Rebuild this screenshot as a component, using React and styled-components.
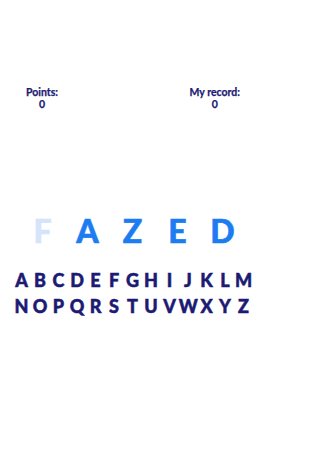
import React from 'react';
import styled, { createGlobalStyle } from 'styled-components';

const GlobalStyle = createGlobalStyle`
  html, body {
    margin: 0;
    padding: 0;
    background: #ffffff;
  }
  body {
    font-family: Lato, "Open Sans", sans-serif;
  }
`;

const Screen = styled.div`
  width: 265px;
  height: 471px;
  display: flex;
  flex-direction: column;
  background: #ffffff;
`;

const Scores = styled.div`
  display: flex;
  justify-content: space-between;
  padding: 86px 25px 0 26px;
`;

const Stat = styled.div`
  display: flex;
  flex-direction: column;
  align-items: center;
  color: #1b1a74;
  font-weight: 700;
  font-size: 10.5px;
  line-height: 12px;
  -webkit-text-stroke: 0.25px #1b1a74;
`;

const Word = styled.div`
  display: grid;
  grid-template-columns: repeat(5, 45px);
  justify-content: center;
  margin-top: 102px;
`;

const WordLetter = styled.span`
  text-align: center;
  font-size: 32px;
  line-height: 38px;
  font-weight: 900;
  color: ${(p) => (p.$faded ? '#d3e4fb' : '#1c7cf2')};
  -webkit-text-stroke: 0.6px ${(p) => (p.$faded ? '#d3e4fb' : '#1c7cf2')};
`;

const Keyboard = styled.div`
  display: flex;
  flex-direction: column;
  gap: 5px;
  margin-top: 20px;
`;

const KeyRow = styled.div`
  display: grid;
  grid-template-columns: repeat(13, 18.5px);
  justify-content: center;
`;

const Key = styled.button`
  border: none;
  background: none;
  padding: 0;
  font-family: Lato, "Open Sans", sans-serif;
  font-size: 18px;
  line-height: 21px;
  font-weight: 900;
  color: #1c1a72;
  -webkit-text-stroke: 0.5px #1c1a72;
  text-align: center;
  cursor: pointer;
`;

const rows = ['ABCDEFGHIJKLM', 'NOPQRSTUVWXYZ'];
const word = 'FAZED';

export default function App() {
  return (
    <>
      <GlobalStyle />
      <Screen>
        <Scores>
          <Stat>
            <span>Points:</span>
            <span>0</span>
          </Stat>
          <Stat>
            <span>My record:</span>
            <span>0</span>
          </Stat>
        </Scores>
        <Word>
          {word.split('').map((ch, i) => (
            <WordLetter key={i} $faded={i === 0}>
              {ch}
            </WordLetter>
          ))}
        </Word>
        <Keyboard>
          {rows.map((row) => (
            <KeyRow key={row}>
              {row.split('').map((ch) => (
                <Key key={ch}>{ch}</Key>
              ))}
            </KeyRow>
          ))}
        </Keyboard>
      </Screen>
    </>
  );
}
